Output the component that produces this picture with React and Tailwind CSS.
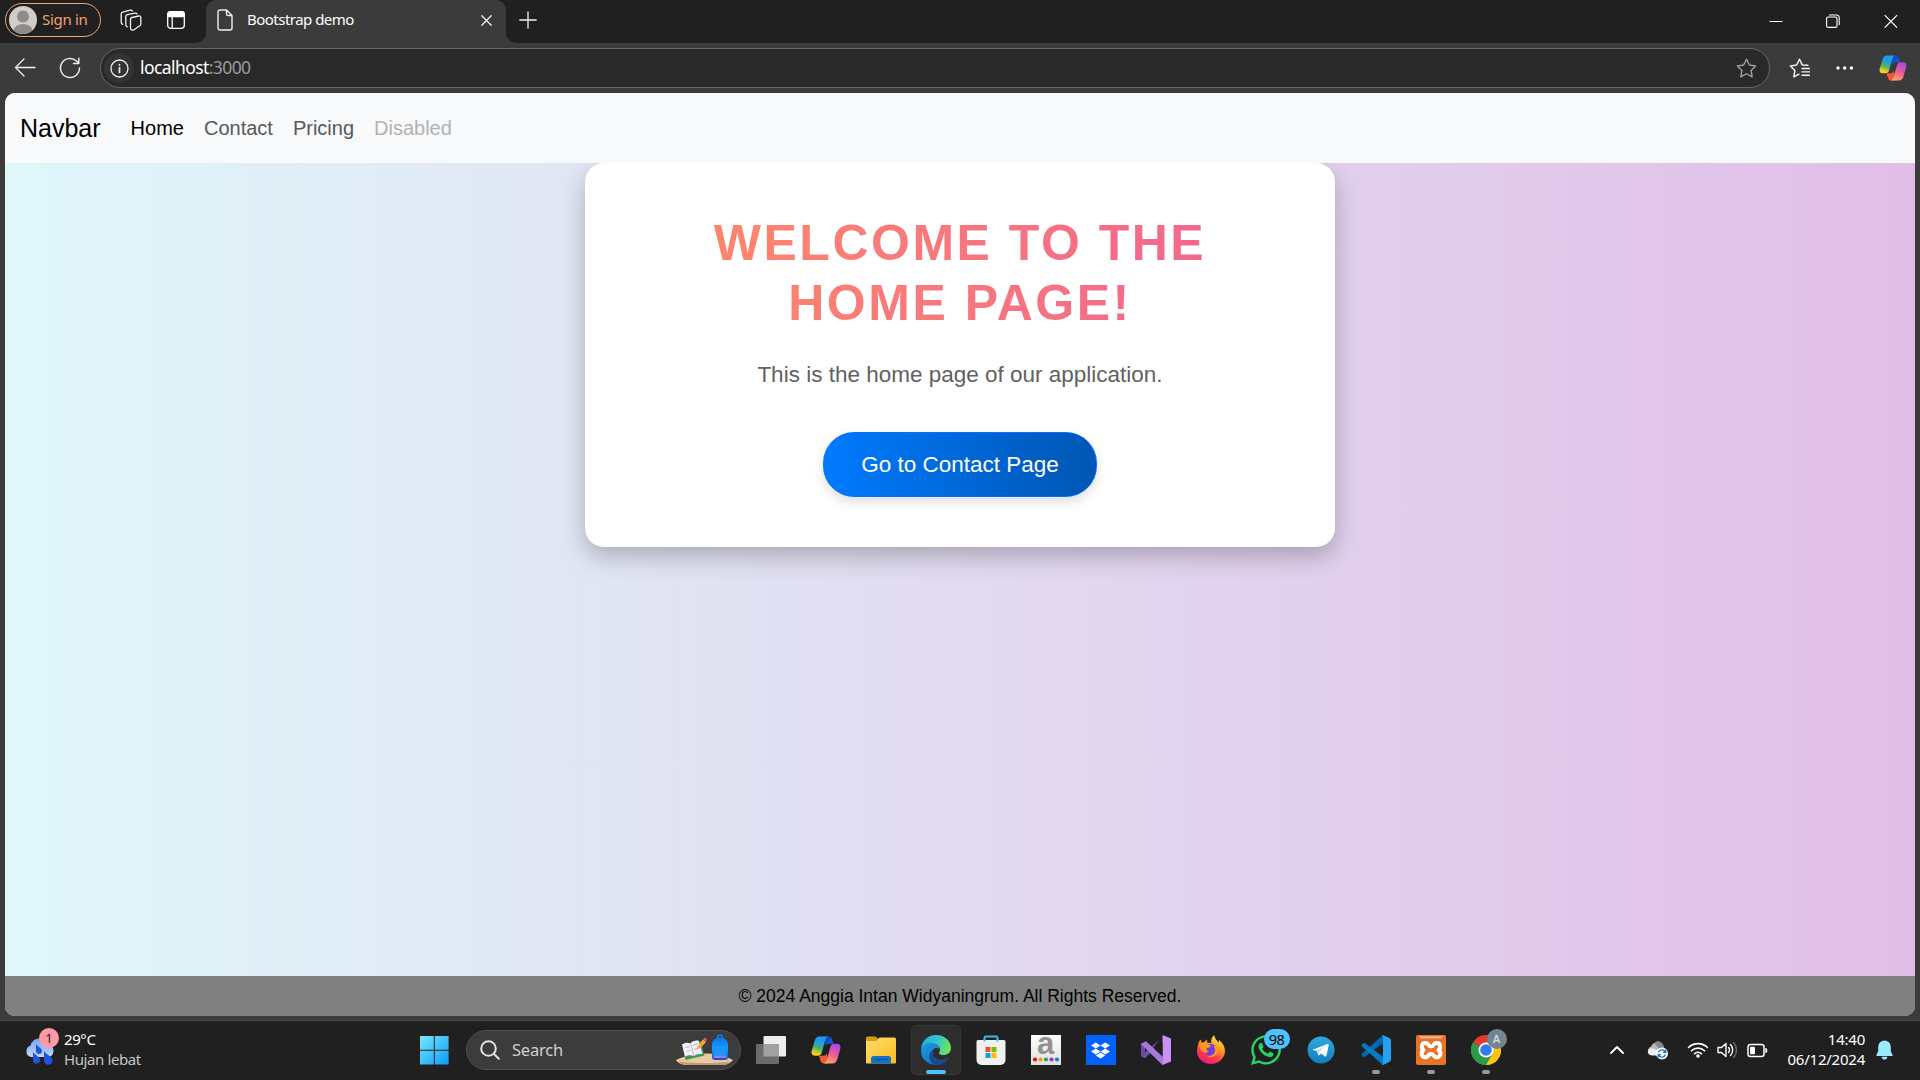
import React from 'react';
import { FaDropbox, FaWhatsapp } from 'react-icons/fa';

const ui = "font-['Noto_Sans','Open_Sans',sans-serif]";

function Copilot({ id, className }) {
  return (
    <svg viewBox="0 0 30 28" className={className}>
      <defs>
        <linearGradient id={id + 'a'} x1="0.6" y1="0" x2="0.3" y2="1">
          <stop offset="0" stopColor="#1b9af0" />
          <stop offset="0.35" stopColor="#1fa0d8" />
          <stop offset="0.62" stopColor="#4fb46a" />
          <stop offset="0.9" stopColor="#f2cf17" />
        </linearGradient>
        <linearGradient id={id + 'b'} x1="0.7" y1="0" x2="0.3" y2="1">
          <stop offset="0" stopColor="#a449e8" />
          <stop offset="0.5" stopColor="#ee5a98" />
          <stop offset="1" stopColor="#ffa85c" />
        </linearGradient>
        <linearGradient id={id + 'c'} x1="0" y1="0" x2="1" y2="1">
          <stop offset="0" stopColor="#0c37b8" />
          <stop offset="1" stopColor="#1b6fe8" />
        </linearGradient>
      </defs>
      <path d="M14 .5h3.500c2 0 3 1 3.600 3l1.200 4.300h-4.500c-2 0-3 1-3.500 3z" fill={'url(#' + id + 'c)'} />
      <path d="M16.500 27.500H13c-2 0-3-1-3.600-3L8 19.700h4.500c2 0 3-1 3.500-3z" fill="#f0593a" />
      <path d="M8.500.5h9c-2 .3-2.700 2-3.300 4l-3.500 12.200c-.6 2-1.700 3-3.700 3H4c-3.200 0-4-2.500-3.200-5.200l3-10C4.600 1.800 6.200.5 8.500.5z" fill={'url(#' + id + 'a)'} />
      <path d="M21.500 27.500h-9c2-.3 2.700-2 3.300-4l3.500-12.200c.6-2 1.700-3.500 3.700-3.500h3c3.200 0 4 2.500 3.200 5.200l-3 10.500c-.8 2.700-2.400 4-4.700 4z" fill={'url(#' + id + 'b)'} />
    </svg>
  );
}

function Line({ box = '0 0 20 20', w = 1.3, className, children }) {
  return (
    <svg viewBox={box} className={className} fill="none" stroke="currentColor" strokeWidth={w} strokeLinecap="round" strokeLinejoin="round">
      {children}
    </svg>
  );
}

const star = 'M10 1.200l2.700 5.500 6 .9-4.300 4.300 1 6-5.400-2.900-5.400 2.900 1-6L1.300 7.600l6-.9z';

function TabStrip() {
  return (
    <div className={'flex h-[43px] bg-[#202020] text-[#f0f0f0] ' + ui}>
      <div className="mt-[3px] ml-[5px] flex h-[34px] w-[96px] shrink-0 items-center rounded-full border-[1.500px] border-[#efa36b] pl-[3px]">
        <svg viewBox="0 0 28 28" className="size-7 shrink-0">
          <clipPath id="avatar"><circle cx="14" cy="14" r="14" /></clipPath>
          <g clipPath="url(#avatar)">
            <rect width="28" height="28" fill="#d0cecb" />
            <circle cx="14" cy="10.500" r="6" fill="#8f8c89" />
            <ellipse cx="14" cy="25" rx="9.500" ry="7" fill="#8f8c89" />
          </g>
        </svg>
        <span className="ml-[5px] pb-[2px] text-[15px] whitespace-nowrap tracking-[-0.300px] text-[#efa36b]">Sign in</span>
      </div>
      <Line className="mt-[9px] ml-[19px] size-[22px] shrink-0" box="0 0 22 22">
        <path d="M10.500 10.300c0-1 .6-1.600 1.500-1.800l6.800-1.500c1.200-.2 2 .4 2 1.500v6.500c0 .8-.3 1.300-1 1.700l-5.800 4c-1.400.9-3.500.3-3.500-1.500z" />
        <path d="M7.300 17.800c-.9-.3-1.500-1-1.500-2V7.500c0-.9.600-1.600 1.500-1.800l7.500-1.500c1-.2 1.800.1 2.200.8M2.700 15.300c-.9-.3-1.500-1-1.500-2V5c0-.9.600-1.600 1.500-1.800l7.500-2c1-.2 1.800.1 2.200.8" />
      </Line>
      <svg viewBox="0 0 18 18" className="mt-[11px] ml-[25px] size-[18px] shrink-0" fill="none" stroke="white" strokeWidth="1.300">
        <rect x=".7" y=".7" width="16.600" height="16.600" rx="3" />
        <path d="M.7 3.500C.7 1.800 1.800.7 3.500.7h11c1.700 0 2.800 1.100 2.800 2.800v2H.7z" fill="white" />
        <path d="M5.200 5v12" />
      </svg>
      <div className="ml-[11px] flex w-[10px] shrink-0 bg-[#3b3b3b]"><div className="w-full rounded-br-[10px] bg-[#202020]" /></div>
      <div className="flex w-[300px] shrink-0 rounded-t-[10px] bg-[#3b3b3b]">
        <Line className="mt-[9px] ml-[11px] h-[22px] w-[16px]" box="0 0 16 22" w={1.4}>
          <path d="M3 1h6.500L15 6.500V19a2 2 0 0 1-2 2H3a2 2 0 0 1-2-2V3a2 2 0 0 1 2-2zM9.500 1v4a1.500 1.500 0 0 0 1.500 1.500h4" />
        </Line>
        <span className="mt-[8px] ml-[14px] text-[15px] leading-[22px] tracking-[-0.520px] whitespace-nowrap text-white">Bootstrap demo</span>
        <Line className="mt-[15px] mr-[14px] ml-auto size-[11px]" box="0 0 11 11"><path d="M.8.8l9.400 9.400M10.200.8L.8 10.200" /></Line>
      </div>
      <div className="flex w-[10px] shrink-0 bg-[#3b3b3b]"><div className="w-full rounded-bl-[10px] bg-[#202020]" /></div>
      <Line className="mt-[11px] ml-[3px] size-[18px]" box="0 0 18 18"><path d="M9 .8v16.400M.8 9h16.400" /></Line>
      <div className="mt-[14px] mr-[22px] ml-auto flex text-white">
        <svg viewBox="0 0 14 14" className="size-[14px]" stroke="white"><path d="M.5 7.500h13" /></svg>
        <svg viewBox="0 0 14 14" className="ml-[43px] size-[14px]" fill="none" stroke="white" strokeWidth="1.100">
          <rect x=".6" y="3" width="10.400" height="10.400" rx="1.500" /><path d="M3 1h7.500A2.600 2.600 0 0 1 13.200 3.500V11" />
        </svg>
        <svg viewBox="0 0 14 14" className="ml-[44px] size-[14px]" stroke="white" strokeWidth="1.200"><path d="M.7 1.200l12.400 12.400M13.100 1.200L.7 13.600" /></svg>
      </div>
    </div>
  );
}

function Toolbar() {
  return (
    <div className={'flex h-[50px] items-center bg-[#3b3b3b] text-[#f2f2f2] ' + ui}>
      <Line className="ml-[14px] size-[22px]" box="0 0 22 22"><path d="M10 2L1.500 10.500 10 19M1.500 10.500H21" /></Line>
      <Line className="ml-[23px] size-[22px]" box="0 0 22 22" w={1.4}><path d="M20.500 11a9.500 9.500 0 1 1-3.300-7.200L19.500 6M19.800 1.200V6.500H14.500" /></Line>
      <div className="ml-[19px] flex h-10 w-[1670px] items-center rounded-full border border-[#666] bg-[#292929]">
        <div className="ml-[3px] flex size-[30px] items-center justify-center rounded-full bg-[#343434]">
          <Line className="size-[19px]" box="0 0 19 19" w={1.3}><circle cx="9.500" cy="9.500" r="8.500" /><path d="M9.500 8.500v5M9.500 5.500v.4" strokeWidth="1.700" /></Line>
        </div>
        <span className="ml-[6px] pb-[2px] text-[17.500px] tracking-[-0.580px] text-white">localhost<span className="text-[#9a9a9a]">:3000</span></span>
        <Line className="mr-[12px] ml-auto size-[21px] text-[#a0a0a0]"><path d={star} /></Line>
      </div>
      <Line className="ml-[19px] size-[21px]" w={1.4}>
        <path d="M18 6.900l-5.400-.3L10 1.200 7.300 6.700l-6 .9 4.300 4.300-1 6 4.800-2.600M12.500 10H19.500M12.500 13.200H19.500M12.500 16.400H19.500" />
      </Line>
      <svg viewBox="0 0 18 6" className="ml-[26px] h-[6px] w-[18px]" fill="white"><circle cx="2" cy="3" r="1.700" /><circle cx="8.700" cy="3" r="1.700" /><circle cx="15.400" cy="3" r="1.700" /></svg>
      <Copilot id="top" className="ml-[25px] h-[26px] w-[28px]" />
    </div>
  );
}

function Page() {
  return (
    <div className="mx-[5px] flex h-[923px] flex-col overflow-hidden rounded-[10px] bg-gradient-to-r from-[#e0f7fa] to-[#e1bee7] font-['Liberation_Sans',Arial,sans-serif]">
      <nav className="flex h-[70px] shrink-0 items-center bg-[#f8f9fa] px-[15px] text-[20px] text-black">
        <span className="mr-[20px] pb-px text-[25px] leading-[30px]">Navbar</span>
        <span className="px-[10px]">Home</span>
        <span className="px-[10px] text-[#575858]">Contact</span>
        <span className="px-[10px] text-[#575858]">Pricing</span>
        <span className="px-[10px] text-[#b2b3b4]">Disabled</span>
      </nav>
      <main className="min-h-0 flex-1 overflow-hidden">
        <div className="mx-auto flex h-[384px] w-[750px] flex-col items-center rounded-[19px] bg-white px-[50px] pt-[50px] text-center shadow-[0_10px_25px_rgba(0,0,0,0.24)]">
          <h1 className="w-full bg-gradient-to-r from-[#ff8a65] to-[#f06292] bg-clip-text text-[50px] leading-[60px] font-bold tracking-[2.500px] text-transparent uppercase">Welcome to the Home Page!</h1>
          <p className="mt-[24px] text-[22.500px] leading-9 text-[#616161]">This is the home page of our application.</p>
          <div className="mt-[39px] flex h-[65px] w-[274px] items-center justify-center rounded-[31px] border border-[#0d6efd] bg-gradient-to-r from-[#007bff] to-[#0056b3] text-[22.500px] whitespace-nowrap text-white shadow-[0_5px_12px_rgba(0,0,0,0.13)]">Go to Contact Page</div>
        </div>
      </main>
      <footer className="flex h-10 shrink-0 items-center justify-center bg-[#808080] text-[17.500px] text-black">© 2024 Anggia Intan Widyaningrum. All Rights Reserved.</footer>
    </div>
  );
}

function Folder() {
  return (
    <svg viewBox="0 0 30 28" className="h-7 w-[30px]">
      <defs><linearGradient id="fold" x1="0" y1="0" x2="1" y2="1"><stop offset="0" stopColor="#ffdc70" /><stop offset="1" stopColor="#fdbd1d" /></linearGradient></defs>
      <path d="M0 2a1.500 1.500 0 0 1 1.500-1.500h8L12.500 3H28v5H0z" fill="#d99b08" />
      <path d="M0 5h10.500l3-3.500H28.500A1.500 1.500 0 0 1 30 3v23.500a1 1 0 0 1-1 1H1a1 1 0 0 1-1-1z" fill="url(#fold)" />
      <path d="M5 27.500v-5a2.500 2.500 0 0 1 2.500-2.500h15a2.500 2.500 0 0 1 2.500 2.500v5z" fill="#1674c8" />
      <path d="M8.500 23.500h13" stroke="#0b4e94" strokeWidth="1.300" />
    </svg>
  );
}

function Edge() {
  return (
    <svg viewBox="0 0 30 30" className="size-[30px]">
      <defs>
        <linearGradient id="edgeTop" x1="0" y1=".2" x2="1" y2=".5"><stop offset="0" stopColor="#28a9e9" /><stop offset=".5" stopColor="#30c5cf" /><stop offset="1" stopColor="#70e458" /></linearGradient>
        <linearGradient id="edgeLeft" x1="0" y1="0" x2="1" y2="1"><stop offset="0" stopColor="#209de6" /><stop offset="1" stopColor="#0f60ad" /></linearGradient>
      </defs>
      <path d="M0 14C.7 5.600 7 0 15 0c9 0 15 6.500 15 13 0 4.500-3.500 7-7.500 7-3.300 0-5.500-1.200-4.300-2.800 2-2.600.5-7-4.200-8.200C8.500 7.500 2 9 0 14z" fill="url(#edgeTop)" />
      <path d="M0 15.500C.3 10 5 7.300 10.500 7.800c4.800.4 8 3.200 8 6.700-1.800-2-5-2-6.300.5-2.200 4.200 1 10.500 8.200 10 3-.2 5.200-1.500 7.200-2.500C25.500 27 20.500 30 15 30 6.500 30-.4 23.500 0 15.500z" fill="url(#edgeLeft)" />
      <path d="M12.200 15c-2.200 4.200 1 10.500 8.200 10 3-.2 5.200-1.500 7.200-2.500C25 27.500 20 30 15.500 30 8 29 5.500 18.500 12.200 15z" fill="#164b91" />
    </svg>
  );
}

function Store() {
  return (
    <svg viewBox="0 0 30 30" className="size-[30px]">
      <path d="M8.500 7V2.500A1 1 0 0 1 9.500 1.500h11a1 1 0 0 1 1 1V7" fill="none" stroke="#38b9ed" strokeWidth="1.800" />
      <path d="M.5 6.500a1.500 1.500 0 0 1 1.500-1.500h26a1.500 1.500 0 0 1 1.500 1.500V25a5 5 0 0 1-5 5h-19a5 5 0 0 1-5-5z" fill="#f0f0f0" />
      <path d="M8.500 6.500V3M21.500 6.500V3" stroke="#38b9ed" strokeWidth="1.800" />
      <path d="M9.500 12h5v5h-5z" fill="#f15022" /><path d="M15.500 12h5v5h-5z" fill="#80bb03" />
      <path d="M9.500 18h5v5h-5z" fill="#05a4ef" /><path d="M15.500 18h5v5h-5z" fill="#ffb902" />
    </svg>
  );
}

function LetterA() {
  const dots = ['#e50a16', '#f39c12', '#20aa50', '#9038ca', '#1480cf'];
  return (
    <div className="relative flex size-[30px] justify-center bg-gradient-to-b from-white to-[#dedede]">
      <span className="h-[22px] font-['Liberation_Sans',sans-serif] text-[31px] leading-[17px] font-bold text-[#929292]">a</span>
      <svg viewBox="0 0 30 5" className="absolute bottom-[3px] left-0 h-[5px] w-[30px]">
        {dots.map((c, i) => <circle key={c} cx={4 + i * 5.5} cy="2.500" r="2.100" fill={c} />)}
      </svg>
    </div>
  );
}

function VisualStudio() {
  return (
    <svg viewBox="0 0 30 30" className="size-[30px]">
      <path d="M0 9l4-2 5 4.500v7L4 23l-4-2z" fill="#6c4aa3" />
      <path d="M4 11.500v7l4-3.500z" fill="#202020" />
      <path d="M22 0L4 23l-4-2 18-16z" fill="#7250a8" />
      <path d="M0 9l5-2.500 17 15V30z" fill="#a578dc" />
      <path d="M21.500 0L30 3.500v23L21.500 30z" fill="#ca91f8" />
      <path d="M12 15l9.500-8v16z" fill="#202020" />
      <path d="M0 9l5-2.500 16.500 15V30z" fill="#a578dc" />
    </svg>
  );
}

function Firefox() {
  return (
    <svg viewBox="0 0 30 30" className="size-[30px]">
      <defs>
        <linearGradient id="ff" x1=".8" y1="0" x2=".3" y2="1"><stop offset="0" stopColor="#fff24a" /><stop offset=".4" stopColor="#ff9a1e" /><stop offset=".7" stopColor="#ff3d45" /><stop offset="1" stopColor="#e51888" /></linearGradient>
      </defs>
      <path d="M3 6.500L5 4.500l.5 3L8 7.300l3-2.800.3 3.300 4 .2c-.8-3 .5-6 3-8C18.500 4 21 4.500 22.500 8l.5-3c4 3 6 7 6 11.500C28.500 24 22 29 15 29 7 29 1 23.500 1 16c0-3.500 1-6.500 2-9.500z" fill="url(#ff)" />
      <circle cx="14.800" cy="15" r="6.200" fill="#7141d6" />
      <path d="M3 9c3-2 6-1 8-.5l4 2.300c-1 2-3 1.900-4 2.200-1.500 1 .5 3 2 3.500-1.500 1.500-4 1.500-6 .2C5 15.500 3 12 3 9z" fill="#ff9520" />
      <path d="M17.500 10c3 1 5 4 3.500 8-1.500 3.500-6 5-9.500 3 6 0 8-3.500 7.500-6.500z" fill="#ff9a24" />
    </svg>
  );
}

function WhatsApp() {
  return (
    <div className="relative size-[30px]">
      <FaWhatsapp className="-m-[2px] size-[34px] text-[#25d366]" />
      <span className="absolute -top-[6px] left-[13px] flex h-5 w-[26px] items-center justify-center rounded-full bg-[#4cc2ff] pb-px text-[14.500px] leading-5 tracking-[-0.500px] text-black">98</span>
    </div>
  );
}

function Telegram() {
  return (
    <svg viewBox="0 0 30 30" className="size-[30px]">
      <defs><linearGradient id="tg" x1="0" y1="0" x2="0" y2="1"><stop offset="0" stopColor="#2fa8e2" /><stop offset="1" stopColor="#1180bd" /></linearGradient></defs>
      <circle cx="15" cy="15" r="13.500" fill="url(#tg)" />
      <path d="M6.500 14.800L21.500 9c1-.3 1.400.2 1.200 1.200L20.500 20.500c-.2 1-.8 1.200-1.700.7l-3.700-2.800-2 1.900c-.5.400-.8.2-1-.5l-1.300-3.800-4.300-1.200z" fill="white" />
      <path d="M11 16l8-5.200-6.300 6.200-.5 3z" fill="#aed0e5" />
    </svg>
  );
}

function VsCode() {
  return (
    <svg viewBox="0 0 30 30" className="size-[30px]">
      <path d="M1 18.500c-.7.6-.7 1.300 0 1.900l1.500 1.400c.5.400 1 .4 1.600 0L22 8.200V0z" fill="#0269ae" />
      <path d="M1 11.500c-.7-.6-.7-1.300 0-1.900l1.500-1.400c.5-.4 1-.4 1.600 0L22 21.800V30z" fill="#0779c2" />
      <path d="M20.500.7c.5-.7 1.300-.8 2-.5l6 3c1 .5 1.500 1.200 1.500 2.200v19.200c0 1-.5 1.700-1.500 2.200l-6 3c-.7.300-1.500.2-2-.5 1 .4 1.500-.1 1.500-1.200V2c0-1.100-.5-1.600-1.500-1.300z" fill="#27a2f3" />
    </svg>
  );
}

function Xampp() {
  return (
    <svg viewBox="0 0 30 30" className="size-[30px]">
      <rect width="30" height="30" rx="2" fill="#e77428" />
      <path d="M3 1.500h24l-2 1.700H5z" fill="#f8c39c" />
      <path d="M10.500 8.200c-5.500-1-5.500 5-3 6.800-3 2-2.500 8.500 3 7 2.500-.7 1.500-3 4.500-3s2 2.300 4.500 3c5.500 1.500 6-5 3-7 2.500-1.800 2.500-7.800-3-6.800-2.500.5-1.500 3.300-4.500 3.300s-2-2.800-4.500-3.300z" fill="none" stroke="white" strokeWidth="4" strokeLinejoin="round" />
    </svg>
  );
}

function Chrome() {
  return (
    <div className="relative size-[30px]">
      <svg viewBox="0 0 30 30" className="size-[30px]">
        <path d="M15 15L2 7.500A15 15 0 0 1 28 7.500z" fill="#e33b2e" />
        <path d="M15 15L28 7.500A15 15 0 0 1 15 30z" fill="#fcc30f" />
        <path d="M15 15v15A15 15 0 0 1 2 7.500z" fill="#2c9b48" />
        <path d="M15 7.500H28a15 15 0 0 1-13 22.500l6.500-11.300z" fill="#fcc30f" />
        <path d="M8.500 18.700L2 7.500A15 15 0 0 0 15 30l6.500-11.300z" fill="#2c9b48" />
        <circle cx="15" cy="15" r="7.500" fill="white" /><circle cx="15" cy="15" r="5.800" fill="#2e7cf0" />
      </svg>
      <span className="absolute -top-[6px] left-[16px] flex size-5 items-center justify-center rounded-full bg-[#718690] text-[11px] font-semibold text-[#cfd8dc]">A</span>
    </div>
  );
}

function TaskView() {
  return (
    <svg viewBox="0 0 30 28" className="h-7 w-[30px]">
      <rect x="7.500" y="0" width="22.500" height="20.500" rx="1" fill="#ededed" />
      <rect x="0" y="8" width="23" height="20" rx="1" fill="#6c6c6c" />
      <rect x="7.500" y="8" width="15.500" height="12.500" fill="#a1a1a1" />
    </svg>
  );
}

function Weather() {
  return (
    <div className="relative h-[44px] w-[39px]">
      <svg viewBox="0 0 30 30" className="absolute top-[9px] left-[5px] size-[30px]">
        <defs><linearGradient id="cl" x1="0" y1="0" x2="0" y2="1"><stop offset="0" stopColor="#73a4f3" /><stop offset="1" stopColor="#c2d6fa" /></linearGradient></defs>
        <path d="M6 20a6 6 0 0 1-.5-11.500A9.500 9.500 0 0 1 23.500 7.500a6.400 6.400 0 0 1 0 12.500z" fill="url(#cl)" />
        <path d="M11 7c2 2.500 6 4.500 6 7a3 3 0 0 1-6 0zM8 15c2 3 7 5 7 8a3.500 3.500 0 0 1-7 0zM19 14c2 3.500 8.500 5.500 8.500 9.500a4.200 4.200 0 0 1-8.500 0z" fill="#1c55e6" />
      </svg>
      <span className="absolute top-0 left-[19px] flex size-5 items-center justify-center rounded-full bg-[#ff99a4] text-[13px] text-[#222]">1</span>
    </div>
  );
}

function SearchArt() {
  return (
    <svg viewBox="0 0 58 32" className="h-8 w-[58px]">
      <defs><linearGradient id="bag" x1="0" y1="0" x2="0" y2="1"><stop offset="0" stopColor="#0a75ef" /><stop offset=".5" stopColor="#159cff" /><stop offset="1" stopColor="#0759cf" /></linearGradient></defs>
      <path d="M0 26c10-4 16-6.500 29-6.500S49 22 57 26c-3 4-7 5-12 5H13c-6 0-11-1-13-5z" fill="#ecc89e" />
      <path d="M2 27.500c16 2 38 2 53 0-3 3-6 3.500-10 3.500H13c-5 0-9-1-11-3.500z" fill="#c59a70" />
      <path d="M6.500 11l18-4 4 14.500-19 4.500z" fill="#3a9958" />
      <path d="M6 10.500c3-2 6-2 8.500-1 2-3 5-3 8-3l4 13.500c-3 0-6 0-8.500 2-3-1-6-1-9 .8z" fill="#f2f1fa" />
      <path d="M14.500 9.500L18 22M9.500 13.500l4-1M10.500 17.500l4-1M17 11.500l5-2M18 15.500l5-2" stroke="#aaa6c5" strokeWidth=".8" />
      <path d="M21 13.500L27 5.500l3 2.500-5.500 6-4 1.500z" fill="#ffa52d" /><path d="M27 5.500l1.500-1.800 2.500 1.300-1 3z" fill="#ef5168" />
      <path d="M41.500 4c0-4 5-4 5 0" fill="none" stroke="#1278ed" strokeWidth="1.600" />
      <path d="M36 11c0-10 16-10 16 0v12a3 3 0 0 1-3 3H39a3 3 0 0 1-3-3z" fill="url(#bag)" />
      <path d="M37.500 21c1-8 12-8 13 0v2.500h-13z" fill="#2a91f5" /><path d="M38 23h12" stroke="#ae79f2" strokeWidth="1.800" />
    </svg>
  );
}

const apps = [
  [<TaskView />], [<Copilot id="task" className="h-7 w-[30px]" />], [<Folder />], [<Edge />, 'active'], [<Store />], [<LetterA />],
  [<div className="flex size-[30px] items-center justify-center bg-[#0061fe]"><FaDropbox className="size-[19px] text-white" /></div>],
  [<VisualStudio />], [<Firefox />], [<WhatsApp />], [<Telegram />], [<VsCode />, 'open'], [<Xampp />, 'open'], [<Chrome />, 'open'],
];

function Taskbar() {
  return (
    <div className={'flex h-[59px] items-center bg-[#202020] pb-px text-[15px] leading-5 text-white ' + ui}>
      <div className="flex w-[419px] items-center pl-5">
        <Weather />
        <div className="ml-[5px] pb-[3px] tracking-[-0.400px]"><div>29°C</div><div className="text-[#c6c6c6]">Hujan lebat</div></div>
      </div>
      <svg viewBox="0 0 30 30" className="size-[30px]">
        <defs><linearGradient id="win" gradientUnits="userSpaceOnUse" x1="0" y1="0" x2="30" y2="30"><stop offset="0" stopColor="#7cedff" /><stop offset="1" stopColor="#0898f8" /></linearGradient></defs>
        <path d="M1 1h13.800v13.800H1zM15.800 1h13.800v13.800H15.800zM1 15.800h13.800v13.800H1zM15.800 15.800h13.800v13.800H15.800z" fill="url(#win)" />
      </svg>
      <div className="ml-[17px] flex h-10 w-[275px] items-center rounded-full border border-[#505050] bg-[#3c3c3c] pr-[6px] pl-[13px]">
        <Line className="size-[20px] text-[#e2e2e2]" w={2}><circle cx="8.500" cy="8.500" r="7.300" /><path d="M14 14l4.800 4.800" /></Line>
        <span className="ml-[12px] text-[16.500px] tracking-[-0.200px] text-[#d0d0d0]">Search</span>
        <div className="ml-auto"><SearchArt /></div>
      </div>
      <div className="ml-[2px] flex">
        {apps.map(([icon, state], i) => (
          <div key={i} className="flex w-[55px] justify-center">
            <div className={state === 'active' ? 'relative flex size-[50px] items-center justify-center rounded-[5px] border border-[#383838] bg-[#2d2d2d]' : 'relative flex size-[50px] items-center justify-center'}>
              {icon}
              {state === 'active' && <span className="absolute bottom-0 h-1 w-5 rounded-full bg-[#4cc2ff]" />}
              {state === 'open' && <span className="absolute bottom-[1px] h-1 w-2 rounded-full bg-[#9a9a9a]" />}
            </div>
          </div>
        ))}
      </div>
      <div className="mr-[27px] ml-auto flex items-center">
        <Line className="h-[10px] w-[16px]" box="0 0 16 10" w={1.9}><path d="M2 8l6-6 6 6" /></Line>
        <svg viewBox="0 0 22 20" className="ml-[22px] h-5 w-[22px]">
          <path d="M4.500 15a4.500 4.500 0 0 1-.5-8.500A7 7 0 0 1 17 7.500L8 15z" fill="#b9b9b9" /><path d="M5 15.500c-6-.5-5-7.500-.5-7 4 0 5 3 9 1.500l-3 5.500z" fill="#eee" />
          <path d="M7 3c4-4 9-1 10 4l-4 2.500z" fill="#888" />
          <circle cx="15" cy="13.500" r="6" fill="white" />
          <path d="M11.500 12.500a3.800 3.800 0 0 1 7-.5M18.800 9.500V12.300H16M18.500 14.500a3.800 3.800 0 0 1-7 .5M11.200 17.500v-2.800H14" fill="none" stroke="#1376c8" strokeWidth="1.300" />
        </svg>
        <Line className="ml-[18px] h-[16px] w-[22px]" box="0 0 22 16" w={1.6}><path d="M1.500 5.500a13.500 13.500 0 0 1 19 0M4.500 8.800a9.200 9.200 0 0 1 13 0M7.500 11.800a5 5 0 0 1 7 0" /><circle cx="11" cy="14" r="1" fill="currentColor" /></Line>
        <Line className="ml-[8px] h-[18px] w-[21px]" box="0 0 21 18" w={1.4}><path d="M1 6.500h3.500L9 2.500v13L4.500 11.500H1zM11.500 6.500a3.500 3.500 0 0 1 0 5M13.500 3.500a8 8 0 0 1 0 11" /><path d="M16.500 1.500a11 11 0 0 1 0 15" stroke="#686868" /></Line>
        <svg viewBox="0 0 21 15" className="ml-[9px] h-[15px] w-[21px]"><rect x="1" y="1.500" width="16" height="12" rx="2.500" fill="none" stroke="white" strokeWidth="1.500" /><rect x="3" y="3.700" width="5" height="7.600" rx="1" fill="white" /><path d="M18.300 5c1.500 0 2 .8 2 2.500s-.5 2.500-2 2.500z" fill="white" /></svg>
        <div className="ml-[19px] w-[78px] pb-[3px] text-right tracking-[-0.230px] whitespace-nowrap"><div>14:40</div><div>06/12/2024</div></div>
        <svg viewBox="0 0 17 20" className="ml-[11px] h-5 w-[17px]" fill="#99ebff"><path d="M8.500.5a6.300 6.300 0 0 1 6.300 6.300v4.500l1.800 3.700c.2.500 0 .9-.5.900H.9c-.5 0-.7-.4-.5-.9l1.800-3.700V6.800A6.300 6.300 0 0 1 8.500.5zM5.700 16.800h5.600a2.800 2.800 0 0 1-5.600 0z" /></svg>
      </div>
    </div>
  );
}

export default function App() {
  return (
    <div className="flex h-[1080px] w-[1920px] flex-col overflow-hidden bg-[#3b3b3b]">
      <TabStrip />
      <Toolbar />
      <Page />
      <div className="h-[5px] shrink-0 border-b border-[#4a4a4a]" />
      <Taskbar />
    </div>
  );
}
